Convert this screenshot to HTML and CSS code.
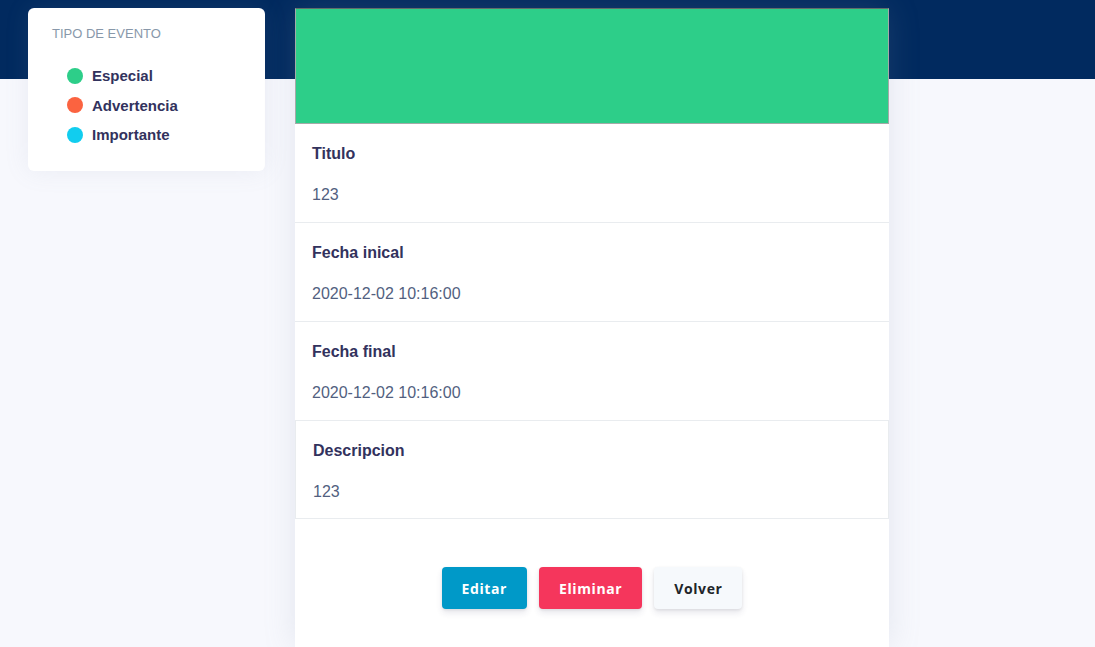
FILE: index.html
```html
<!DOCTYPE html>
<html lang="es">
<head>
<meta charset="utf-8">
<title>Evento</title>
<link rel="stylesheet" href="styles.css">
</head>
<body>
<div class="band"></div>
<div class="layout">
  <aside class="legend-card">
    <h6 class="legend-title">Tipo de evento</h6>
    <ul class="legend">
      <li><span class="dot dot-green"></span>Especial</li>
      <li><span class="dot dot-orange"></span>Advertencia</li>
      <li><span class="dot dot-cyan"></span>Importante</li>
    </ul>
  </aside>
  <main class="event-card">
    <div class="color-block"></div>
    <section class="field">
      <div class="label">Titulo</div>
      <div class="value">123</div>
    </section>
    <section class="field">
      <div class="label">Fecha inical</div>
      <div class="value">2020-12-02 10:16:00</div>
    </section>
    <section class="field">
      <div class="label">Fecha final</div>
      <div class="value">2020-12-02 10:16:00</div>
    </section>
    <section class="field field-boxed">
      <div class="label">Descripcion</div>
      <div class="value">123</div>
    </section>
    <div class="actions">
      <button class="btn btn-info">Editar</button>
      <button class="btn btn-danger">Eliminar</button>
      <button class="btn btn-light">Volver</button>
    </div>
  </main>
</div>
</body>
</html>
```
FILE: styles.css
```css
html, body {
  margin: 0;
  padding: 0;
}
body {
  background: #f7f8fd;
  font-family: "Liberation Sans", Arial, sans-serif;
  height: 647px;
  overflow: hidden;
  position: relative;
}
.band {
  position: absolute;
  left: 0;
  top: 0;
  right: 0;
  height: 79px;
  background: #012a5f;
}
.layout {
  position: relative;
  display: flex;
  align-items: flex-start;
  padding: 8px 0 0 28px;
  gap: 30px;
}
.legend-card {
  width: 237px;
  height: 163px;
  box-sizing: border-box;
  background: #fff;
  border-radius: 6px;
  padding: 18px 24px 0 24px;
  box-shadow: 0 0 24px rgba(136, 152, 170, 0.12);
}
.legend-title {
  margin: 0;
  font-size: 13px;
  font-weight: 400;
  text-transform: uppercase;
  color: #8898aa;
  line-height: 15px;
}
.legend {
  list-style: none;
  margin: 0;
  padding: 20px 0 0 15px;
}
.legend li {
  display: flex;
  align-items: center;
  height: 29.5px;
  font-size: 15px;
  font-weight: 700;
  color: #32325d;
}
.dot {
  width: 16px;
  height: 16px;
  border-radius: 50%;
  margin-right: 9px;
}
.dot-green { background: #2dce89; }
.dot-orange { background: #fb6340; }
.dot-cyan { background: #11cdef; }

.event-card {
  width: 594px;
  height: 639px;
  background: #fff;
  box-shadow: 0 0 30px rgba(136, 152, 170, 0.18);
}
.color-block {
  height: 116px;
  box-sizing: border-box;
  background: #2dce89;
  border: 1px solid #a4aaa8;
  border-top-color: #5f6f6a;
}
.field {
  height: 99px;
  box-sizing: border-box;
  padding: 18px 17px 0 17px;
  border-bottom: 1px solid #e9ecef;
}
.field-boxed {
  height: 98px;
  border: 1px solid #e9ecef;
  border-top: 0;
}
.label {
  font-size: 16px;
  font-weight: 700;
  line-height: 24px;
  color: #32325d;
}
.value {
  margin-top: 17px;
  font-size: 16px;
  line-height: 24px;
  color: #525f7f;
}
.actions {
  display: flex;
  justify-content: center;
  gap: 12px;
  padding-top: 48px;
}
.btn {
  height: 42px;
  border: 0;
  border-radius: 4px;
  padding: 0 20px;
  font-family: "Open Sans", sans-serif;
  font-size: 14px;
  font-weight: 700;
  letter-spacing: 0.6px;
  box-shadow: 0 4px 6px rgba(50, 50, 93, 0.11), 0 1px 3px rgba(0, 0, 0, 0.08);
}
.btn-info { background: #0099c8; color: #fff; }
.btn-danger { background: #f5365c; color: #fff; }
.btn-light { background: #f6f9fc; color: #212529; }
```
